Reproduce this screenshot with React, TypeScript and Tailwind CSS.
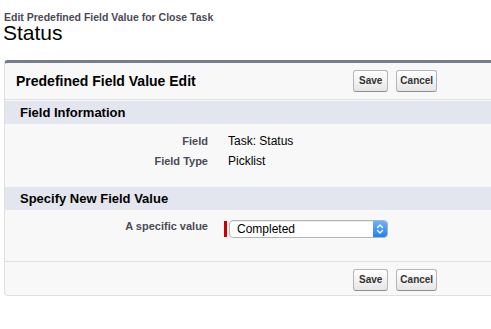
import React from 'react';

const font = { fontFamily: '"Liberation Sans", Arial, Helvetica, sans-serif' };

const Btn: React.FC<{ label: string; className?: string }> = ({ label, className }) => (
  <button
    className={`h-[22px] rounded-[3px] border border-[#b5b5b5] border-b-[#8f8f8f] bg-gradient-to-b from-white to-[#e6e6e6] text-[10px] font-bold leading-none text-[#333] ${className ?? ''}`}
  >
    {label}
  </button>
);

const Buttons: React.FC = () => (
  <div className="flex gap-[8px]">
    <Btn label="Save" className="px-[5px]" />
    <Btn label="Cancel" className="px-[3px]" />
  </div>
);

const SectionHead: React.FC<{ title: string; className?: string }> = ({ title, className }) => (
  <div className={`flex h-[23px] items-center bg-[#e3e6ee] pl-[15px] text-[13px] font-bold text-black ${className ?? ''}`}>
    {title}
  </div>
);

const Label: React.FC<{ children: React.ReactNode; className?: string }> = ({ children, className }) => (
  <div className={`text-right text-[11px] font-bold text-[#4a4a56] ${className ?? ''}`}>{children}</div>
);

const App: React.FC = () => {
  return (
    <div className="h-[329px] w-[491px] overflow-hidden bg-white" style={font}>
      <div className="pl-[4px] pt-[11px] text-[10.5px] font-bold leading-[12px] text-[#4a4a56]">
        Edit Predefined Field Value for Close Task
      </div>
      <h1 className="-mt-[2px] pl-[3px] text-[21px] leading-[24px] text-black">Status</h1>

      <div className="ml-[4px] mt-[15px] w-[540px] rounded-[4px] border border-t-[3px] border-[#e0e0e0] border-t-[#767c92] bg-[#f8f8f8]">
        {/* header */}
        <div className="grid h-[37px] grid-cols-[348px_auto] items-center border-b border-[#e0e0e0]">
          <h2 className="pl-[11px] text-[14px] font-bold text-black">Predefined Field Value Edit</h2>
          <Buttons />
        </div>

        <SectionHead title="Field Information" className="mt-[1px]" />
        <div className="grid grid-cols-[203px_1fr] gap-x-[20px] pb-[16px] pt-[7px] leading-[20px]">
          <Label>Field</Label>
          <div className="text-[12px] text-black">Task: Status</div>
          <Label>Field Type</Label>
          <div className="text-[12px] text-black">Picklist</div>
        </div>

        <SectionHead title="Specify New Field Value" />
        <div className="grid grid-cols-[203px_1fr] gap-x-[20px] pb-[23px] pt-[7px]">
          <Label className="leading-[18px]">A specific value</Label>
          <div className="-ml-[4px] flex items-center gap-[2px] pt-[3px]">
            <div className="h-[16px] w-[3px] bg-[#c00]" />
            <div className="flex h-[18px] w-[159px] items-stretch overflow-hidden rounded-[4px] border border-[#b4b4b4] bg-white shadow-[inset_0_1px_1px_rgba(0,0,0,0.08)]">
              <span className="flex-1 pl-[7px] text-[12px] leading-[16px] text-black">Completed</span>
              <span className="flex w-[14px] items-center justify-center bg-gradient-to-b from-[#6bb2fb] to-[#1f7ff6]">
                <svg width="8" height="12" viewBox="0 0 8 12" fill="none" stroke="white" strokeWidth="1.4" strokeLinecap="round" strokeLinejoin="round">
                  <path d="M1.5 4.5 L4 2 L6.5 4.5" />
                  <path d="M1.5 7.5 L4 10 L6.5 7.5" />
                </svg>
              </span>
            </div>
          </div>
        </div>

        {/* footer */}
        <div className="grid h-[34px] grid-cols-[348px_auto] items-start border-t border-[#e0e0e0] pt-[7px]">
          <div />
          <Buttons />
        </div>
      </div>
    </div>
  );
};

export default App;
